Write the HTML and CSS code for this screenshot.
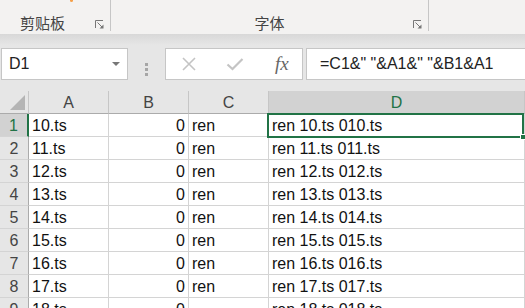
FILE: index.html
```html
<!DOCTYPE html>
<html lang="zh-CN">
<head>
  <meta charset="UTF-8">
  <meta name="viewport" content="width=device-width, initial-scale=1.0">
  <title>Excel - ren</title>
  <link rel="stylesheet" href="styles.css">
</head>
<body>
  <!-- 功能区底部 -->
  <div class="ribbon">
    <span class="dot"></span>
    <div class="group clip">
      <span class="label">剪贴板</span>
      <svg class="launcher" width="9" height="9" viewBox="0 0 9 9"><path d="M0.5 8V0.5H8" fill="none" stroke="#777"/><path d="M2.5 2.5L7 7" stroke="#777"/><path d="M8.5 8.5H4.5L8.5 4.5Z" fill="#777"/></svg>
    </div>
    <div class="group font">
      <span class="label">字体</span>
      <svg class="launcher" width="9" height="9" viewBox="0 0 9 9"><path d="M0.5 8V0.5H8" fill="none" stroke="#777"/><path d="M2.5 2.5L7 7" stroke="#777"/><path d="M8.5 8.5H4.5L8.5 4.5Z" fill="#777"/></svg>
    </div>
  </div>

  <!-- 编辑栏 -->
  <div class="fbar">
    <div class="namebox">
      <span>D1</span>
      <span class="arrow"></span>
    </div>
    <div class="grip"><i></i><i></i><i></i></div>
    <div class="fbtns">
      <svg width="16" height="16" viewBox="0 0 16 16"><path d="M2 2L14 14M14 2L2 14" stroke="#c4c4c4" stroke-width="1.6"/></svg>
      <svg width="18" height="16" viewBox="0 0 18 16"><path d="M1.5 8.5L6.5 13L16.5 3" fill="none" stroke="#c4c4c4" stroke-width="2.2"/></svg>
      <span class="fx">fx</span>
    </div>
    <div class="finput">=C1&amp;" "&amp;A1&amp;" "&amp;B1&amp;A1</div>
  </div>

  <!-- 工作表 -->
  <div class="sheet">
    <div class="grid">
      <div class="hd corner"><span class="tri"></span></div>
      <div class="hd">A</div>
      <div class="hd">B</div>
      <div class="hd">C</div>
      <div class="hd sel">D</div>
    </div>
    <div class="grid" id="rows"></div>
    <div class="selbox"><span class="handle"></span></div>
  </div>

  <script>
    //행 데이터 만들기 (10.ts ~ 18.ts)
    const rows = document.getElementById('rows');
    let html = '';
    for(let i=1; i<=9; i++){
      const n = 9+i;
      html += '<div class="rh'+(i==1?' sel':'')+'">'+i+'</div>';
      html += '<div class="c">'+n+'.ts</div>';
      html += '<div class="c num">0</div>';
      html += '<div class="c">'+(i<9?'ren':'')+'</div>';
      html += '<div class="c">ren '+n+'.ts 0'+n+'.ts</div>';
    }
    rows.innerHTML = html;
  </script>
</body>
</html>
```

FILE: styles.css
```css
*{margin: 0; padding: 0; box-sizing: border-box;}
body{
  width: 525px; height: 308px; overflow: hidden;
  background: #e6e6e6;
  font-family: "Liberation Sans", Arial, sans-serif;
}
/* 리본 */
.ribbon{
  height: 34px;
  background: #f3f2f1;
  display: flex;
  position: relative;
}
.dot{
  position: absolute; left: 70px; top: 0;
  width: 3px; height: 2px; background: #f5a04a;
  border-radius: 0 0 2px 2px;
}
.group{
  height: 31px;
  border-right: 1px solid #c6c6c6;
  display: flex; align-items: flex-end;
  position: relative;
}
.clip{width: 111px; padding-left: 20px;}
.font{width: 318px; justify-content: center;}
.label{
  font-family: "Noto Sans CJK SC", sans-serif;
  font-size: 15px; color: #444; line-height: 16px;
  margin-bottom: 0;
}
.launcher{position: absolute; right: 6px; bottom: 2px;}
/* 편집줄 */
.fbar{
  height: 57px;
  padding-top: 14px;
  display: flex;
  background: linear-gradient(#d8d8d8 0, #e6e6e6 11px);
}
.namebox{
  width: 127px; height: 32px; margin-left: 1px;
  background: #fff; border: 1px solid #c6c6c6;
  display: flex; align-items: center; justify-content: space-between;
  padding: 0 7px 0 7px;
  font-size: 16px; color: #222;
}
.arrow{
  width: 0; height: 0;
  border-left: 4px solid transparent; border-right: 4px solid transparent;
  border-top: 4px solid #777;
}
.grip{
  width: 37px;
  display: flex; flex-direction: column; align-items: center; justify-content: center; gap: 2px;
}
.grip i{display: block; width: 3px; height: 3px; background: #a6a6a6;}
.fbtns{
  width: 138px; height: 32px;
  background: #fff; border: 1px solid #c6c6c6;
  display: flex; align-items: center;
  padding-left: 15px; gap: 29px;
}
.fx{
  font-family: "Liberation Serif", serif; font-style: italic;
  font-size: 19px; color: #666; margin-left: 2px;
}
.finput{
  flex: 1; height: 32px; margin-left: 3px;
  background: #fff; border: 1px solid #c6c6c6; border-right: none;
  padding-left: 13px; line-height: 30px;
  font-size: 16px; color: #222;
}
/* 시트 */
.sheet{position: relative; background: #fff;}
.grid{
  display: grid;
  grid-template-columns: 29px 80px 80px 80px 256px;
}
.hd{
  height: 23px;
  background: #e6e6e6;
  border-right: 1px solid #c6c6c6;
  border-bottom: 1px solid #ababab;
  text-align: center; line-height: 24px;
  font-size: 16px; color: #444;
}
.hd.sel{background: #d2d2d2; color: #217346;}
.corner{position: relative;}
.tri{
  position: absolute; right: 3px; bottom: 3px;
  width: 0; height: 0;
  border-left: 15px solid transparent;
  border-bottom: 15px solid #b4b4b4;
}
.rh{
  height: 23px;
  background: #e6e6e6;
  border-right: 1px solid #ababab;
  border-bottom: 1px solid #d4d4d4;
  text-align: center; line-height: 23px;
  font-size: 16px; color: #444;
}
.rh.sel{background: #d2d2d2; color: #217346; border-right: 2px solid #217346;}
.c{
  height: 23px;
  border-right: 1px solid #d4d4d4;
  border-bottom: 1px solid #d4d4d4;
  padding: 0 3px; line-height: 23px;
  font-size: 16px; color: #111;
  white-space: nowrap; overflow: hidden;
}
.c.num{text-align: right;}
/* 선택 영역 */
.selbox{
  position: absolute; left: 267px; top: 22px;
  width: 257px; height: 25px;
  border: 2px solid #217346;
}
.handle{
  position: absolute; right: -4px; bottom: -4px;
  width: 6px; height: 6px;
  background: #217346; border: 1px solid #fff;
}
```
